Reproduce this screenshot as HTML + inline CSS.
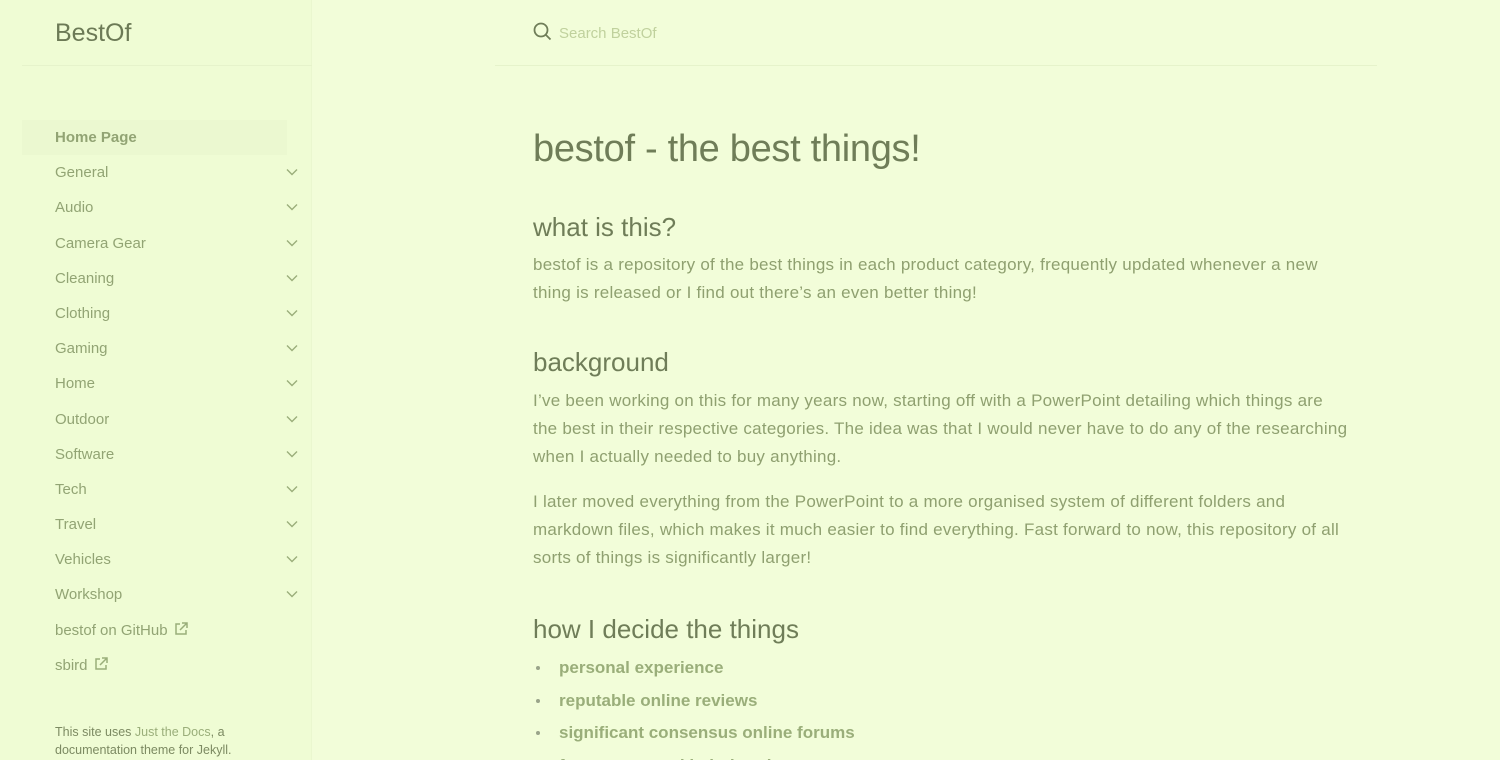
<!DOCTYPE html>
<html style="overflow:hidden;height:760px"><head><meta charset="utf-8"><style>
*{margin:0;padding:0;box-sizing:border-box}
body{width:1500px;height:760px;overflow:hidden;background:#f2fdd9;font-family:"Liberation Sans",sans-serif;color:#8fa070;position:relative}
.side{position:absolute;left:0;top:0;width:312px;height:760px;background:#effcd4;border-right:1px solid #eaf7cf}
.logo{position:absolute;left:55px;top:19px;font-size:25px;color:#6c7a56}
.hr1{position:absolute;left:22px;top:65px;width:290px;height:1px;background:#e6f3cb}
.nav{position:absolute;left:0;top:120px;width:312px}
.nav div{height:35.2px;line-height:35px;padding-left:55px;font-size:15px;color:#92a474;position:relative;white-space:nowrap}
.nav div.act{background:#ebf8d0;font-weight:bold;width:265px;margin-left:22px;padding-left:33px}
.nav svg.ch{position:absolute;left:286px;top:13px}
.nav svg.ex{vertical-align:-2px;margin-left:5px}
.foot{position:absolute;left:55px;top:723px;font-size:12.5px;line-height:18px;color:#7c8a62}
.foot span{color:#9aae7a}
.search{position:absolute;left:533px;top:22px;font-size:15px;color:#c0d19d}
.search span{position:absolute;left:26px;top:3px;white-space:nowrap}
.hr2{position:absolute;left:495px;top:65px;width:882px;height:1px;background:#e6f3cb}
.main{position:absolute;left:533px;top:0}
h1{position:absolute;top:128px;font-weight:normal;font-size:38px;color:#6f7d58;white-space:nowrap;letter-spacing:-.3px}
h2{position:absolute;font-weight:normal;font-size:26px;color:#6f7d58;white-space:nowrap}
p{position:absolute;font-size:17px;letter-spacing:.25px;line-height:28px;white-space:nowrap;color:#8fa070}
ul{position:absolute;top:652px;list-style:none}
li{font-size:17px;font-weight:bold;line-height:32.5px;color:#9aae7a;padding-left:26px;position:relative;white-space:nowrap}
li:before{content:"";position:absolute;left:3px;top:14px;width:4px;height:4px;border-radius:50%;background:#9aa48a}
</style></head><body>
<div class="side">
<div class="logo">BestOf</div>
<div class="hr1"></div>
<div class="nav">
<div class="act">Home Page</div>
<div>General</div><div>Audio</div><div>Camera Gear</div><div>Cleaning</div><div>Clothing</div><div>Gaming</div><div>Home</div><div>Outdoor</div><div>Software</div><div>Tech</div><div>Travel</div><div>Vehicles</div><div>Workshop</div>
<div>bestof on GitHub<svg class="ex" width="16" height="16" viewBox="0 0 16 16" fill="none" stroke="#9aae7a" stroke-width="1.5"><path d="M7 3H3v10h10V9M9 2h5v5M14 2L7 9"/></svg></div>
<div>sbird<svg class="ex" width="16" height="16" viewBox="0 0 16 16" fill="none" stroke="#9aae7a" stroke-width="1.5"><path d="M7 3H3v10h10V9M9 2h5v5M14 2L7 9"/></svg></div>
</div>
<div class="foot">This site uses <span>Just the Docs</span>, a<br>documentation theme for Jekyll.</div>
</div>
<script>
document.querySelectorAll('.nav div').forEach((d,i)=>{if(i>=1&&i<=13)d.insertAdjacentHTML('beforeend','<svg class="ch" width="12" height="8" viewBox="0 0 12 8" fill="none" stroke="#9aae7a" stroke-width="1.4"><path d="M1 1.5l5 5 5-5"/></svg>')});
</script>
<div class="search"><svg width="19" height="19" viewBox="0 0 19 19" fill="none" stroke="#6f7d58" stroke-width="1.8"><circle cx="8" cy="8" r="6.5"/><path d="M13 13l4.5 4.5"/></svg><span>Search BestOf</span></div>
<div class="hr2"></div>
<div class="main">
<h1>bestof - the best things!</h1>
<h2 style="top:212px">what is this?</h2>
<p style="top:251px">bestof is a repository of the best things in each product category, frequently updated whenever a new<br>thing is released or I find out there’s an even better thing!</p>
<h2 style="top:347px">background</h2>
<p style="top:387px">I’ve been working on this for many years now, starting off with a PowerPoint detailing which things are<br>the best in their respective categories. The idea was that I would never have to do any of the researching<br>when I actually needed to buy anything.</p>
<p style="top:488px">I later moved everything from the PowerPoint to a more organised system of different folders and<br>markdown files, which makes it much easier to find everything. Fast forward to now, this repository of all<br>sorts of things is significantly larger!</p>
<h2 style="top:614px">how I decide the things</h2>
<ul><li>personal experience</li><li>reputable online reviews</li><li>significant consensus online forums</li><li>frequency used in industries</li></ul>
</div>
</body></html>
